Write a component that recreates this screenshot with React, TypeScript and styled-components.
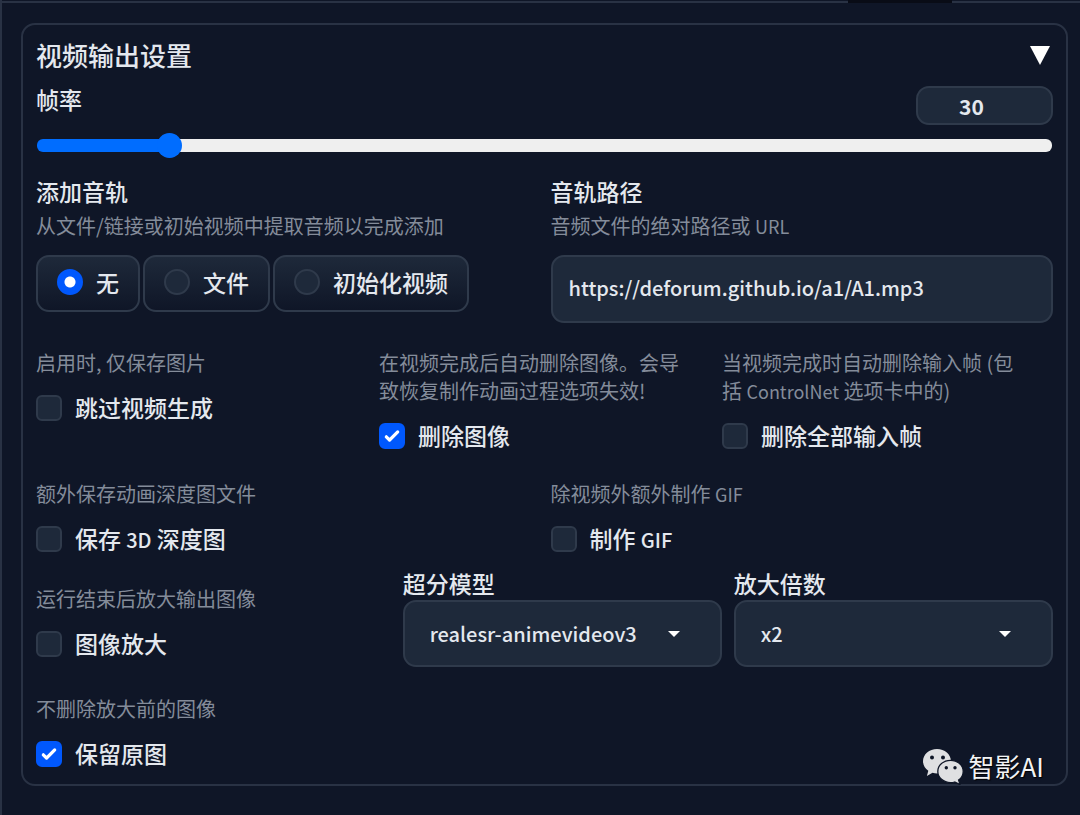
import React, { useId, useState } from 'react';
import styled, { createGlobalStyle } from 'styled-components';

const color = {
  page: '#0f1627',
  line: '#293244',
  field: '#1e293a',
  fieldLine: '#2f3a4b',
  text: '#e4e8ee',
  muted: '#848c9a',
  blue: '#0058fd',
  track: '#006dff',
};

const GlobalStyle = createGlobalStyle`
  *, *::before, *::after { box-sizing: border-box; }
  body {
    margin: 0;
    background: ${color.page};
    color: ${color.text};
    font-family: "Noto Sans CJK SC", "Noto Sans", sans-serif;
    font-size: 23px;
    font-weight: 500;
    line-height: 34px;
  }
  input, select, button { font: inherit; color: inherit; margin: 0; }
`;

const Page = styled.main`
  position: relative;
  min-height: 100vh;
  border-left: 2px solid ${color.line};
`;

const TabStrip = styled.div`
  display: flex;
  height: 3px;
`;

const TabEdge = styled.div<{ $grow?: boolean }>`
  flex: ${(p) => (p.$grow ? '1' : '0 0 128px')};
  border-bottom: 2px solid ${color.line};
`;

const ActiveTab = styled.div`
  flex: 0 0 104px;
  background: #090c16;
`;

const Panel = styled.section`
  margin: 20px 12px 28px 19px;
  padding: 13px;
  border: 2px solid ${color.line};
  border-radius: 14px;
`;

const PanelHeader = styled.button`
  display: flex;
  align-items: center;
  justify-content: space-between;
  width: 100%;
  height: 38px;
  padding: 0 3px 4px 0;
  border: 0;
  background: none;
  font-size: 26px;
  text-align: left;
  cursor: pointer;
`;

const SliderHead = styled.div`
  display: flex;
  justify-content: space-between;
  height: 43px;
  margin-top: 6px;
`;

const NumberInput = styled.input`
  align-self: flex-end;
  width: 137px;
  height: 39px;
  padding: 0 26px 0 0;
  border: 2px solid ${color.fieldLine};
  border-radius: 13px;
  background: ${color.field};
  font-size: 21px;
  font-weight: 700;
  text-align: center;
  appearance: textfield;
  &::-webkit-inner-spin-button { display: none; }
`;

const Range = styled.input`
  display: block;
  appearance: none;
  width: 100%;
  height: 26px;
  margin: 7px 0 16px;
  padding: 0 1px;
  background: none;
  &::-webkit-slider-runnable-track {
    height: 13px;
    border-radius: 6px;
    background: linear-gradient(to right, ${color.track} var(--fill), #efefef var(--fill));
  }
  &::-webkit-slider-thumb {
    appearance: none;
    width: 25px;
    height: 25px;
    margin-top: -6px;
    border-radius: 50%;
    background: ${color.track};
  }
`;

const Row = styled.div<{ $columns: string; $space?: number }>`
  display: grid;
  grid-template-columns: ${(p) => p.$columns};
  gap: 12px;
  margin-top: ${(p) => p.$space ?? 0}px;
`;

const Block = styled.div<{ $drop?: boolean }>`
  min-width: 0;
  padding-top: ${(p) => (p.$drop ? '19px' : '0')};
`;

const Group = styled.fieldset`
  min-width: 0;
  margin: 0;
  padding: 0;
  border: 0;
`;

const Legend = styled.legend`
  padding: 0 0 4px;
`;

const Label = styled.label<{ $spaced?: boolean }>`
  display: block;
  padding-bottom: ${(p) => (p.$spaced ? '4px' : '0')};
`;

const Help = styled.p`
  margin: 0;
  padding-right: 24px;
  color: ${color.muted};
  font-size: 20px;
  font-weight: 400;
  line-height: 28px;
`;

const Latin = styled.span<{ $small?: boolean }>`
  font-size: ${(p) => (p.$small ? '18px' : '20px')};
  line-height: 1;
`;

const Radios = styled.div`
  display: flex;
  gap: 3px;
  margin-top: 15px;
`;

const RadioCard = styled.label`
  display: flex;
  align-items: center;
  gap: 13px;
  height: 57px;
  padding: 0 19px 4px;
  border: 2px solid ${color.fieldLine};
  border-radius: 13px;
  background: linear-gradient(${color.field}, ${color.page});
`;

const Radio = styled.input`
  appearance: none;
  width: 26px;
  height: 26px;
  border: 2px solid ${color.fieldLine};
  border-radius: 50%;
  background: ${color.field};
  &:checked {
    border-color: ${color.blue};
    background: radial-gradient(circle, #fff 5px, ${color.blue} 6px);
  }
`;

const TextInput = styled.input`
  display: block;
  width: 100%;
  height: 68px;
  margin-top: 15px;
  padding: 0 16px 4px;
  border: 2px solid ${color.fieldLine};
  border-radius: 13px;
  background: ${color.field};
  font-size: 20px;
`;

const CheckLabel = styled.label`
  display: flex;
  align-items: center;
  gap: 13px;
  height: 34px;
  margin-top: 14px;
`;

const CheckText = styled.span`
  padding-bottom: 2px;
`;

const CheckBox = styled.span`
  display: grid;
  width: 26px;
  height: 26px;
  > * { grid-area: 1 / 1; }
  svg { pointer-events: none; visibility: hidden; }
  input:checked + svg { visibility: visible; }
`;

const CheckInput = styled.input`
  appearance: none;
  width: 26px;
  height: 26px;
  border: 2px solid ${color.fieldLine};
  border-radius: 6px;
  background: ${color.field};
  &:checked { border-color: ${color.blue}; background: ${color.blue}; }
`;

const SelectBox = styled.div`
  display: grid;
  align-items: center;
  > * { grid-area: 1 / 1; }
  svg { justify-self: end; margin-right: 41px; pointer-events: none; }
`;

const Select = styled.select`
  appearance: none;
  width: 100%;
  height: 67px;
  padding: 0 56px 0 25px;
  border: 2px solid ${color.fieldLine};
  border-radius: 13px;
  background: ${color.field};
  font-size: 20px;
`;

const Watermark = styled.div`
  position: absolute;
  right: 36px;
  bottom: 30px;
  display: flex;
  align-items: center;
  gap: 5px;
  color: #f2f3f5;
  font-size: 26px;
  font-weight: 400;
  line-height: 36px;
  text-shadow: 1px 1px 1px #000;
`;

/* Sets the Latin words of a Chinese sentence a little smaller than the rest. */
function mixed(text: string, small?: boolean) {
  return text.split(/([A-Za-z0-9]+)/).map((part, i) =>
    i % 2 ? (
      <Latin key={i} $small={small}>
        {part}
      </Latin>
    ) : (
      part
    ),
  );
}

function Check({ help, label, checked = false, drop }: { help: string; label: string; checked?: boolean; drop?: boolean }) {
  const id = useId();
  return (
    <Block $drop={drop}>
      <Help id={id}>{mixed(help, true)}</Help>
      <CheckLabel>
        <CheckBox>
          <CheckInput type="checkbox" defaultChecked={checked} aria-describedby={id} />
          <svg width="26" height="26" viewBox="0 0 16 16" fill="#fff" aria-hidden="true">
            <path d="M12.207 4.793a1 1 0 0 1 0 1.414l-5 5a1 1 0 0 1-1.414 0l-2-2a1 1 0 0 1 1.414-1.414L6.5 9.086l4.293-4.293a1 1 0 0 1 1.414 0z" />
          </svg>
        </CheckBox>
        <CheckText>{mixed(label)}</CheckText>
      </CheckLabel>
    </Block>
  );
}

function Dropdown({ label, options }: { label: string; options: string[] }) {
  const id = useId();
  return (
    <Block>
      <Label htmlFor={id}>{label}</Label>
      <SelectBox>
        <Select id={id}>
          {options.map((o) => (
            <option key={o}>{o}</option>
          ))}
        </Select>
        <svg width="14" height="8" viewBox="0 0 14 8" fill="#fff" aria-hidden="true">
          <path d="M1 1h12L7 7z" />
        </svg>
      </SelectBox>
    </Block>
  );
}

function WeChatMark() {
  return (
    <svg width="42" height="38" viewBox="0 0 42 38" aria-hidden="true">
      <path
        fill="#dfe0e2"
        d="M15 2C7.300 2 1 7.300 1 14.200c0 4 2.100 7.300 5.300 9.500L4.900 29l5.600-3.200c1.500.4 3 .6 4.500.6 7.700 0 14-5.400 14-12.200S22.700 2 15 2z"
      />
      <path
        fill="#dfe0e2"
        stroke="#0f1627"
        strokeWidth="1.300"
        d="M28.500 13.300c-7 0-12.700 4.900-12.700 11.100s5.700 11.200 12.700 11.200c1.500 0 2.900-.2 4.200-.6l5.300 2.600-1.400-4.500c2.800-2.100 4.600-5.200 4.600-8.700 0-6.200-5.700-11.100-12.700-11.100z"
      />
      <g fill="#0f1627">
        <circle cx="10" cy="10.500" r="2" />
        <circle cx="21" cy="10.500" r="2" />
        <circle cx="24.300" cy="20.800" r="1.700" />
        <circle cx="33" cy="20.800" r="1.700" />
      </g>
    </svg>
  );
}

const MIN_FPS = 1;
const MAX_FPS = 240;

export default function App() {
  const [fps, setFps] = useState(30);
  const [open, setOpen] = useState(true);
  const fill = { '--fill': `${1 + ((fps - MIN_FPS) / (MAX_FPS - MIN_FPS)) * 98}%` } as React.CSSProperties;

  return (
    <>
      <GlobalStyle />
      <Page>
        <TabStrip>
          <TabEdge $grow />
          <ActiveTab />
          <TabEdge />
        </TabStrip>
        <Panel>
          <PanelHeader type="button" aria-expanded={open} onClick={() => setOpen(!open)}>
            视频输出设置
            <svg width="20" height="20" viewBox="0 0 20 20" fill="#fff" aria-hidden="true">
              <path d="M0 1h20L10 20z" />
            </svg>
          </PanelHeader>
          {open && (
            <>
              <SliderHead>
                <Label htmlFor="fps">帧率</Label>
                <NumberInput
                  id="fps"
                  type="number"
                  min={MIN_FPS}
                  max={MAX_FPS}
                  value={fps}
                  onChange={(e) => setFps(Number(e.target.value))}
                />
              </SliderHead>
              <Range
                type="range"
                aria-label="帧率"
                min={MIN_FPS}
                max={MAX_FPS}
                value={fps}
                style={fill}
                onChange={(e) => setFps(Number(e.target.value))}
              />
              <Row $columns="1fr 1fr">
                <Group>
                  <Legend>添加音轨</Legend>
                  <Help>从文件/链接或初始视频中提取音频以完成添加</Help>
                  <Radios>
                    {['无', '文件', '初始化视频'].map((name, i) => (
                      <RadioCard key={name}>
                        <Radio type="radio" name="soundtrack" defaultChecked={i === 0} />
                        {name}
                      </RadioCard>
                    ))}
                  </Radios>
                </Group>
                <Block>
                  <Label htmlFor="path" $spaced>音轨路径</Label>
                  <Help>{mixed('音频文件的绝对路径或 URL', true)}</Help>
                  <TextInput id="path" type="text" defaultValue="https://deforum.github.io/a1/A1.mp3" />
                </Block>
              </Row>
              <Row $columns="1fr 1fr 1fr" $space={26}>
                <Check help="启用时, 仅保存图片" label="跳过视频生成" />
                <Check help="在视频完成后自动删除图像。会导致恢复制作动画过程选项失效!" label="删除图像" checked />
                <Check help="当视频完成时自动删除输入帧 (包括 ControlNet 选项卡中的)" label="删除全部输入帧" />
              </Row>
              <Row $columns="1fr 1fr" $space={27}>
                <Check help="额外保存动画深度图文件" label="保存 3D 深度图" />
                <Check help="除视频外额外制作 GIF" label="制作 GIF" />
              </Row>
              <Row $columns="10fr 9fr 9fr" $space={10}>
                <Check help="运行结束后放大输出图像" label="图像放大" drop />
                <Dropdown label="超分模型" options={['realesr-animevideov3', 'realesrgan-x4plus']} />
                <Dropdown label="放大倍数" options={['x2', 'x3', 'x4']} />
              </Row>
              <Row $columns="1fr" $space={28}>
                <Check help="不删除放大前的图像" label="保留原图" checked />
              </Row>
            </>
          )}
        </Panel>
        <Watermark>
          <WeChatMark />
          智影AI
        </Watermark>
      </Page>
    </>
  );
}
